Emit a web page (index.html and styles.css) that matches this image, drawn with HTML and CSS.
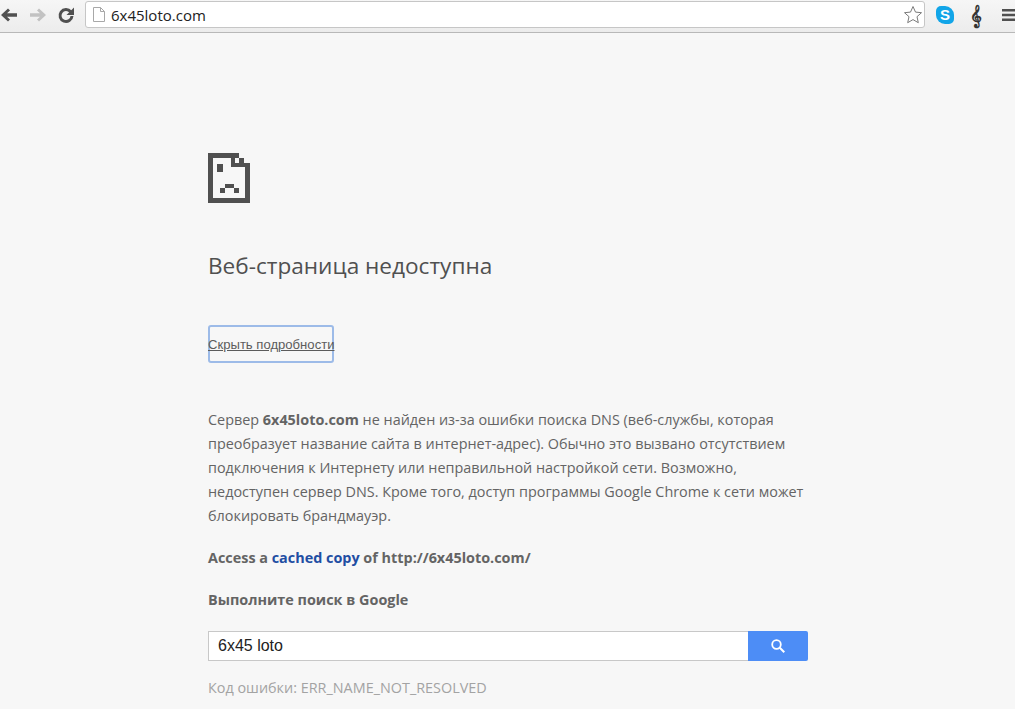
FILE: index.html
```html
<!DOCTYPE html>
<html lang="ru">
<head>
<meta charset="utf-8">
<title>6x45loto.com</title>
<link rel="stylesheet" href="styles.css">
</head>
<body>
<header class="toolbar">
  <svg class="nav-icon" width="18" height="16" viewBox="0 0 18 16"><path d="M1 8 8 1.500l2 2L7 6.300h10v3.400H7l3 2.800-2 2z" fill="#505050"/></svg>
  <svg class="nav-icon forward" width="18" height="16" viewBox="0 0 18 16"><path d="M17 8 10 1.500l-2 2 3 2.800H1v3.400h10l-3 2.800 2 2z" fill="#c2c2c2"/></svg>
  <svg class="nav-icon reload" width="18" height="18" viewBox="0 0 18 18"><path d="M13.700 5.800A6 6 0 1 0 15 10" fill="none" stroke="#505050" stroke-width="3"/><path d="M17 1.500V9h-7.500z" fill="#505050"/></svg>
  <div class="omnibox">
    <svg class="page-icon" width="12" height="15" viewBox="0 0 12 15"><path d="M.5.5h7l4 4v10H.5z" fill="#fff" stroke="#a8a8a8"/><path d="M7.500.5v4h4" fill="none" stroke="#a8a8a8"/></svg>
    <span class="url">6x45loto.com</span>
    <svg class="star" width="20" height="19" viewBox="0 0 20 19"><path d="m10 1.500 2.500 5.600 6 .6-4.500 4 1.300 6L10 14.600 4.700 17.700l1.300-6-4.500-4 6-.6z" fill="#fff" stroke="#7a7a7a"/></svg>
  </div>
  <div class="extensions">
    <span class="skype">S</span>
    <span class="clef">𝄞</span>
    <svg width="13" height="12" viewBox="0 0 13 12" class="menu"><path d="M0 0h13v2.500H0zM0 4.700h13v2.500H0zM0 9.400h13v2.500H0z" fill="#505050"/></svg>
  </div>
</header>
<main class="content">
  <svg class="sad-icon" width="42" height="50" viewBox="0 0 42 50"><path fill="#505050" fill-rule="evenodd" d="M0 0h31v5h5v5h6v40H0zM5 5v40h32V14H23V5zM27 5v5h4V5z"/><path fill="#505050" d="M9 11h6v8H9zM17 31h9v4h5v5h-5v-5h-9v5h-5v-5h5z"/></svg>
  <h1 class="title">Веб-страница недоступна</h1>
  <a class="details" href="#">Скрыть подробности</a>
  <p class="text">Сервер <b>6x45loto.com</b> не найден из-за ошибки поиска DNS (веб-службы, которая преобразует название сайта в интернет-адрес). Обычно это вызвано отсутствием подключения к Интернету или неправильной настройкой сети. Возможно, недоступен сервер DNS. Кроме того, доступ программы Google Chrome к сети может блокировать брандмауэр.</p>
  <p class="strong-line"><b>Access a <a class="cache" href="#">cached copy</a> of http://6x45loto.com/</b></p>
  <p class="strong-line"><b>Выполните поиск в Google</b></p>
  <form class="search">
    <div class="search-input">6x45 loto</div>
    <div class="search-button"><svg width="16" height="16" viewBox="0 0 16 16"><circle cx="6.500" cy="6.500" r="4.300" fill="none" stroke="#fff" stroke-width="1.800"/><path d="m9.800 9.800 4.500 4.500" stroke="#fff" stroke-width="2"/></svg></div>
  </form>
  <p class="code">Код ошибки: ERR_NAME_NOT_RESOLVED</p>
</main>
</body>
</html>
```
FILE: styles.css
```css
html, body { margin: 0; height: 709px; overflow: hidden; }
body { background: #f7f7f7; font-family: "Open Sans", "Noto Sans", sans-serif; color: #646464; }
.toolbar { height: 33px; box-sizing: border-box; padding: 1px 0 4px; display: flex; align-items: center; background: linear-gradient(#f6f6f6, #ececec); border-bottom: 1px solid #b8b8b8; }
.nav-icon { flex: none; margin-right: 11px; }
.forward { margin-right: 10px; }
.reload { margin-right: 10px; }
.omnibox { width: 840px; flex: none; height: 27px; box-sizing: border-box; display: flex; align-items: center; background: #fff; border: 1px solid #c6c6c6; border-radius: 3px; padding: 0 1px 0 7px; }
.page-icon { flex: none; margin-right: 6px; }
.url { font: 15px "Open Sans", sans-serif; color: #222; flex: 1; }
.extensions { display: flex; align-items: center; flex: 1; }
.skype { width: 18px; height: 18px; margin-left: 11px; border-radius: 5px 9px 5px 9px; background: #12a5e8; color: #fff; font: bold 15px/18px "Liberation Sans", sans-serif; text-align: center; }
.clef { width: 14px; margin-left: 16px; font: bold 20px/22px "DejaVu Sans", sans-serif; color: #333; }
.menu { margin-left: 18px; flex: none; }
.content { width: 600px; margin-left: 208px; padding-top: 120px; display: flex; flex-direction: column; align-items: flex-start; }
.sad-icon { display: block; }
.title { margin: 46px 0 0; font: 400 22.600px/34px "Open Sans", sans-serif; color: #505050; }
.details { display: block; margin-top: 42px; width: 126px; height: 38px; box-sizing: border-box; border: 2px solid #9dbbe8; border-radius: 3px; font: 13.100px/35px "Liberation Sans", sans-serif; color: #5c5c5c; white-space: nowrap; text-indent: -2px; }
.text { margin: 45px 0 0; font-size: 14.400px; line-height: 24px; width: 600px; }
.strong-line { margin: 18px 0 0; font-size: 14.400px; line-height: 24px; }
.cache { color: #1f4ea3; text-decoration: none; }
.search { display: flex; width: 600px; height: 30px; margin-top: 19px; }
.search-input { flex: 1; box-sizing: border-box; background: #fff; border: 1px solid #c8c8c8; border-right: 0; padding-left: 9px; font: 16px/28px "Liberation Sans", sans-serif; color: #222; }
.search-button { width: 60px; display: flex; align-items: center; justify-content: center; background: #4d8df6; border-radius: 0 2px 2px 0; }
.code { margin: 17px 0 0; font-size: 14.400px; line-height: 20px; color: #a3a3a3; }
```
